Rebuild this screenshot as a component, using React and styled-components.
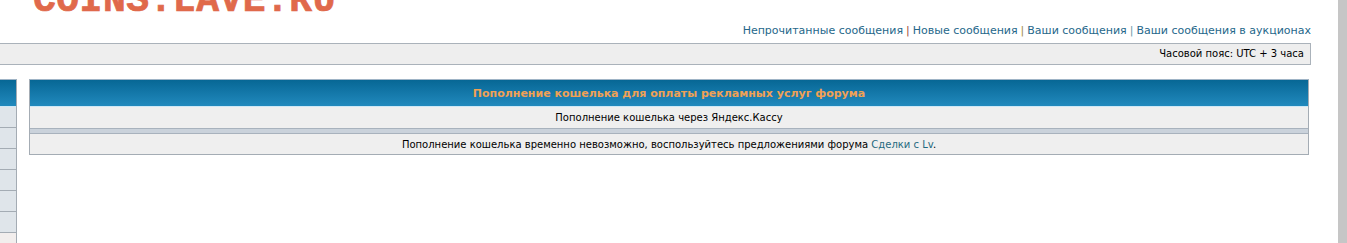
import React from "react";
import styled, { createGlobalStyle } from "styled-components";

const Global = createGlobalStyle`
  html, body { margin: 0; padding: 0; background: #ffffff; overflow: hidden; }
  body { font-family: "DejaVu Sans", Verdana, sans-serif; color: #000; }
`;

const Page = styled.div`
  display: flex;
  width: 1347px;
  height: 243px;
  overflow: hidden;
`;

const Main = styled.div`
  width: 1311px;
  flex: none;
  display: flex;
  flex-direction: column;
`;

const ScrollStrip = styled.div`
  margin-left: 27px;
  width: 9px;
  flex: none;
  background: #c6c6c6;
`;

const Logo = styled.div`
  font-family: "Liberation Mono", "Courier New", monospace;
  font-weight: bold;
  font-size: 38px;
  line-height: 38px;
  height: 38px;
  margin-top: -18px;
  padding-left: 33px;
  letter-spacing: 0.5px;
  color: #e0694b;
  -webkit-text-stroke: 0.7px #e0694b;
  white-space: nowrap;
`;

const NavLinks = styled.div`
  margin-top: 4px;
  height: 14px;
  line-height: 14px;
  font-size: 11px;
  text-align: right;
  white-space: nowrap;
`;

const NavLink = styled.a`
  color: #25678a;
  text-decoration: none;
`;

const Sep = styled.span`
  color: ${(p) => p.$c};
  margin: 0 3px;
`;

const TimeBar = styled.div`
  margin-top: 5px;
  height: 20px;
  border: 1px solid #aab2ba;
  border-left: none;
  background: #eeeeee;
  font-size: 10px;
  line-height: 20px;
  text-align: right;
  padding-right: 6px;
`;

const Content = styled.div`
  margin-top: 14px;
  display: flex;
  gap: 12px;
  align-items: flex-start;
`;

const Side = styled.div`
  width: 16px;
  border-right: 1px solid #a4acb4;
  border-top: 1px solid #9fb4c6;
  display: flex;
  flex-direction: column;
`;

const BlueHead = styled.div`
  height: 26px;
  background: linear-gradient(#076795, #2189bd);
  border-bottom: 1px solid #cde8f6;
  display: flex;
  align-items: center;
  justify-content: center;
  color: #f0a155;
  font-weight: bold;
  font-size: 11px;
  white-space: nowrap;
`;

const SideRow = styled.div`
  height: 20px;
  border-bottom: 1px solid #a4acb4;
  background: ${(p) => (p.$last ? "#f2eeed" : "#dfe5ea")};
`;

const Table = styled.div`
  width: 1278px;
  border: 1px solid #a4acb4;
  border-top-color: #9fb4c6;
  display: flex;
  flex-direction: column;
`;

const Row = styled.div`
  height: ${(p) => p.$h}px;
  background: #efefef;
  font-size: 10px;
  line-height: ${(p) => p.$h + 1}px;
  text-align: center;
  white-space: nowrap;
`;

const Spacer = styled.div`
  height: 4px;
  background: #cad2db;
  border-top: 1px solid #a8b2bd;
  border-bottom: 1px solid #a8b2bd;
`;

const InlineLink = styled.a`
  color: #1f6a80;
  text-decoration: none;
`;

export default function App() {
  const links = [
    "Непрочитанные сообщения",
    "Новые сообщения",
    "Ваши сообщения",
    "Ваши сообщения в аукционах",
  ];
  const sepColors = ["#9a4a3a", "#a08a3a", "#6a9aa8"];
  return (
    <>
      <Global />
      <Page>
        <Main>
          <Logo>COINS.LAVE.RU</Logo>
          <NavLinks>
            {links.map((l, i) => (
              <React.Fragment key={l}>
                {i > 0 && <Sep $c={sepColors[i - 1]}>|</Sep>}
                <NavLink href="#">{l}</NavLink>
              </React.Fragment>
            ))}
          </NavLinks>
          <TimeBar>Часовой пояс: UTC + 3 часа</TimeBar>
          <Content>
            <Side>
              <BlueHead />
              {[0, 1, 2, 3, 4, 5].map((i) => (
                <SideRow key={i} />
              ))}
              <SideRow $last />
            </Side>
            <Table>
              <BlueHead>Пополнение кошелька для оплаты рекламных услуг форума</BlueHead>
              <Row $h={21}>Пополнение кошелька через Яндекс.Кассу</Row>
              <Spacer />
              <Row $h={20}>
                Пополнение кошелька временно невозможно, воспользуйтесь предложениями форума{" "}
                <InlineLink href="#">Сделки с Lv</InlineLink>.
              </Row>
            </Table>
          </Content>
        </Main>
        <ScrollStrip />
      </Page>
    </>
  );
}
